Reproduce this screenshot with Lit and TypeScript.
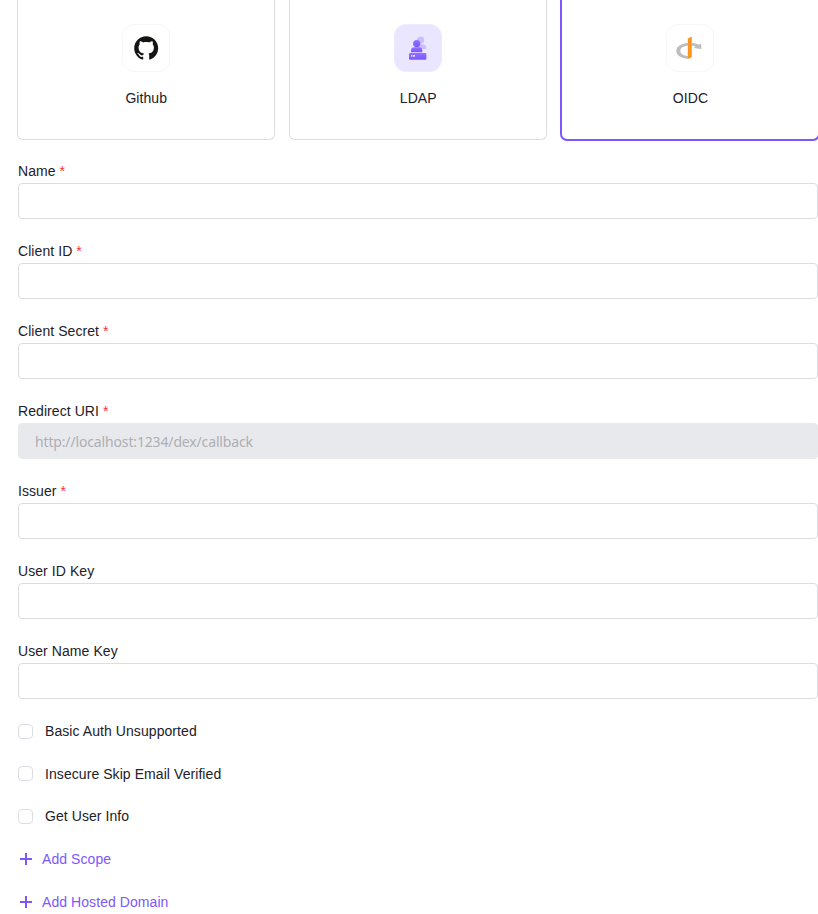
import { LitElement, html, css, svg } from "lit";
import { customElement } from "lit/decorators.js";
import { classMap } from "lit/directives/class-map.js";

const githubIcon = svg`<svg class="glyph" viewBox="0 0 48 48"><path fill="#161514" transform="translate(12.2 12.2) scale(1.5)" d="M8 0C3.58 0 0 3.58 0 8c0 3.54 2.29 6.53 5.47 7.59.4.07.55-.17.55-.38 0-.19-.01-.82-.01-1.49-2.01.37-2.53-.49-2.69-.94-.09-.23-.48-.94-.82-1.13-.28-.15-.68-.52-.01-.53.63-.01 1.08.58 1.23.82.72 1.21 1.87.87 2.33.66.07-.52.28-.87.51-1.07-1.78-.2-3.64-.89-3.64-3.95 0-.87.31-1.59.82-2.15-.08-.2-.36-1.02.08-2.12 0 0 .67-.21 2.2.82.64-.18 1.32-.27 2-.27s1.36.09 2 .27c1.53-1.04 2.2-.82 2.2-.82.44 1.1.16 1.92.08 2.12.51.56.82 1.27.82 2.15 0 3.07-1.87 3.75-3.65 3.95.29.25.54.73.54 1.48 0 1.07-.01 1.93-.01 2.2 0 .21.15.46.55.38A8.01 8.01 0 0 0 16 8c0-4.42-3.58-8-8-8z"/></svg>`;

const ldapIcon = svg`<svg class="glyph" viewBox="0 0 48 48">
  <defs><linearGradient id="g" x1="0" y1="0" x2="0" y2="1"><stop offset="0" stop-color="#9273ff"/><stop offset="1" stop-color="#7a55ff"/></linearGradient></defs>
  <g fill="#cbbdff"><circle cx="26.6" cy="16" r="3.6"/><path d="M24 25v-4.700h4.300a4 4 0 0 1 4 4v.7z"/></g>
  <circle cx="22.700" cy="19.600" r="3.600" fill="url(#g)"/>
  <path fill="url(#g)" d="M17 28.200v-1.500a3.400 3.400 0 0 1 3.400-3.400h4.500a3.400 3.400 0 0 1 3.400 3.400v1.500z"/>
  <rect x="15" y="29.100" width="17.400" height="6.700" rx="1" fill="url(#g)"/>
  <path fill="#fff" opacity=".8" d="M17 31h1.400v1.700H17zM19.100 31h1.900v1.700h-1.900z"/>
</svg>`;

const oidcIcon = svg`<svg class="glyph" viewBox="0 0 48 48">
  <path fill="#bdbdbd" d="M22 19c-6.600.4-11.700 3.500-11.700 7.900 0 4.200 4.800 7.300 11.700 7.800v-2.700c-4.600-.5-7.700-2.500-7.700-5.100 0-2.800 3.100-4.700 7.700-5.300zM25.700 19v2.600c1.600.2 2.900.6 4 1.200l-2.200 1.300 7.900 1-.3-5.500-2.300 1.100c-2-.9-4.500-1.500-7.100-1.700z"/>
  <path fill="#fb9520" d="M21.800 14.400l4-1.900v20.700l-4 1.800z"/>
</svg>`;

@customElement("app-root")
export class AppRoot extends LitElement {
  static styles = css`
    :host {
      display: block;
      box-sizing: border-box;
      height: 914px;
      overflow: hidden;
      background: #fff;
      color: #1d2129;
      font: 14px/20px "Liberation Sans", Arial, sans-serif;
      letter-spacing: 0.07px;
    }
    * { box-sizing: border-box; }
    .providers {
      display: grid;
      grid-template-columns: 258px 258px 259px;
      column-gap: 14px;
      width: 803px;
      height: 141px;
      margin-left: 17px;
      align-items: start;
    }
    .card {
      display: flex;
      flex-direction: column;
      align-items: center;
      height: 140px;
      padding-top: 24px;
      border: 1px solid #dcdce4;
      border-top: 0;
      border-radius: 0 0 6px 6px;
    }
    .card.selected {
      width: 260px;
      height: 141px;
      margin-left: -1px;
      border: 2px solid #7d57fc;
      border-top: 0;
      border-radius: 0 0 7px 7px;
    }
    .card span { padding-left: 0.5px; }
    .card.selected span { padding-left: 1px; }
    .tile {
      width: 48px;
      height: 48px;
      border: 1px solid #f7f7f8;
      border-radius: 12px;
      margin-bottom: 16px;
    }
    .tile.tinted { background: #ebe6ff; border-color: #efebff; }
    .glyph { display: block; width: 48px; height: 48px; margin: -1px; }
    form { margin: 20px 0 0 18px; width: 800px; }
    .field { height: 80px; }
    .label { display: block; height: 22px; }
    .required { color: #f5323d; }
    input[type="text"] {
      display: block;
      width: 100%;
      height: 36px;
      padding: 0 16px;
      border: 1px solid #dcdce4;
      border-radius: 4px;
      background: #fff;
      outline: none;
      font: 14px "Noto Sans", sans-serif;
    }
    input[type="text"]:disabled { background: #e8e9ed; border-color: #e8e9ed; }
    input::placeholder { color: #adafb3; opacity: 1; letter-spacing: -0.15px; }
    .check { display: flex; align-items: center; height: 20px; margin-bottom: 22.6px; gap: 12px; }
    .check input {
      appearance: none;
      width: 15px;
      height: 15px;
      margin: 0.6px 0 0;
      border: 1px solid #dcdce4;
      border-radius: 4px;
      background: #fff;
    }
    .add {
      display: flex;
      align-items: center;
      gap: 10px;
      height: 20px;
      margin-bottom: 23px;
      padding: 0 0 0 2px;
      border: 0;
      background: none;
      color: #7d57fc;
      font: inherit;
      letter-spacing: inherit;
    }
    .plus { width: 12px; height: 12px; }
  `;

  private providers = [
    { name: "Github", icon: githubIcon },
    { name: "LDAP", icon: ldapIcon, tinted: true },
    { name: "OIDC", icon: oidcIcon, selected: true },
  ];

  private fields = [
    { label: "Name", required: true },
    { label: "Client ID", required: true },
    { label: "Client Secret", required: true },
    { label: "Redirect URI", required: true, placeholder: "http://localhost:1234/dex/callback" },
    { label: "Issuer", required: true },
    { label: "User ID Key" },
    { label: "User Name Key" },
  ];

  private options = ["Basic Auth Unsupported", "Insecure Skip Email Verified", "Get User Info"];

  render() {
    return html`
      <div class="providers">
        ${this.providers.map(
          (p) => html`<div class=${classMap({ card: true, selected: !!p.selected })}>
            <div class=${classMap({ tile: true, tinted: !!p.tinted })}>${p.icon}</div>
            <span>${p.name}</span>
          </div>`
        )}
      </div>
      <form>
        ${this.fields.map(
          (f) => html`<div class="field">
            <label class="label">${f.label}${f.required ? html` <span class="required">*</span>` : ""}</label>
            <input type="text" placeholder=${f.placeholder ?? ""} ?disabled=${!!f.placeholder} />
          </div>`
        )}
        ${this.options.map((o) => html`<label class="check"><input type="checkbox" />${o}</label>`)}
        ${["Add Scope", "Add Hosted Domain"].map(
          (t) => html`<button type="button" class="add">
            <svg class="plus" viewBox="0 0 12 12"><path d="M5 0h2v5h5v2H7v5H5V7H0V5h5z" fill="#7d57fc" /></svg>${t}
          </button>`
        )}
      </form>
    `;
  }
}
